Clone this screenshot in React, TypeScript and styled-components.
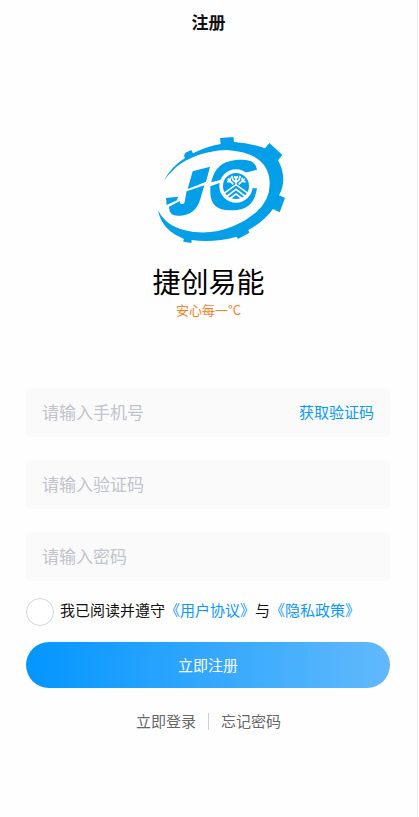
import React from "react";
import styled, { createGlobalStyle } from "styled-components";

const GlobalStyle = createGlobalStyle`
  * { box-sizing: border-box; }
  body {
    margin: 0;
    background: #fefefe;
    color: #111;
    font-family: "Noto Sans CJK SC", sans-serif;
  }
  button, input { font: inherit; }
`;

const Page = styled.div`
  display: flex;
  flex-direction: column;
  min-height: 100vh;
  margin-right: 1px;
  border-right: 1px solid #ededed;
`;

const Header = styled.header`
  display: flex;
  align-items: center;
  justify-content: center;
  height: 44px;
`;

const Title = styled.h1`
  margin: 0;
  font-size: 17px;
  line-height: 24px;
  font-weight: 700;
`;

const Brand = styled.section`
  display: flex;
  flex-direction: column;
  align-items: center;
  padding: 81px 0 68px;
`;

const Logo = styled.svg`
  display: block;
  width: 145px;
  height: 125px;
  margin-left: 28px;
`;

const BrandName = styled.h2`
  margin: 12px 0 0;
  font-size: 28px;
  line-height: 38px;
  font-weight: 400;
  color: #000;
`;

const Slogan = styled.p`
  margin: 0;
  font-size: 13px;
  line-height: 20px;
  color: #ff7f1f;
`;

const Form = styled.form`
  display: flex;
  flex-direction: column;
  padding: 0 27px 0 26px;
`;

const Field = styled.div`
  display: flex;
  align-items: center;
  height: 49px;
  margin-bottom: 23px;
  padding: 0 16px 2px;
  border-radius: 5px;
  background: #fafafa;

  &:last-of-type { margin-bottom: 17px; }
`;

const Input = styled.input`
  flex: 1;
  min-width: 0;
  padding: 0;
  border: 0;
  outline: 0;
  background: transparent;
  font-size: 17px;
  line-height: 26px;
  color: #111;

  &::placeholder { color: #c0c4cc; opacity: 1; }
`;

const CodeButton = styled.button`
  padding: 0;
  border: 0;
  background: transparent;
  font-size: 15px;
  line-height: 24px;
  color: #0b98ff;
`;

const Agreement = styled.label`
  display: flex;
  align-items: center;
  gap: 6px;
  height: 28px;
  margin-bottom: 16px;
  font-size: 15px;
  line-height: 24px;
  white-space: nowrap;
`;

const AgreementText = styled.span`
  padding-bottom: 4px;
`;

const Checkbox = styled.input`
  appearance: none;
  flex: none;
  width: 28px;
  height: 28px;
  margin: 0;
  border: 1px solid #d4d4d4;
  border-radius: 50%;
  background: #fff;

  &:checked { background: #0b98ff; border-color: #0b98ff; }
`;

const PolicyLink = styled.a`
  color: #0b98ff;
  text-decoration: none;
`;

const Submit = styled.button`
  height: 46px;
  border: 0;
  border-radius: 23px;
  background: linear-gradient(90deg, #0396ff, #62b9fb);
  font-size: 15px;
  line-height: 24px;
  color: #fff;
`;

const Footer = styled.nav`
  display: flex;
  align-items: center;
  justify-content: center;
  gap: 12px;
  padding-top: 21px;
`;

const FooterLink = styled.a`
  font-size: 15px;
  line-height: 24px;
  color: #666;
  text-decoration: none;
`;

const Divider = styled.span`
  width: 1px;
  height: 17px;
  background: #d0d0d0;
`;

function BrandLogo() {
  return (
    <Logo viewBox="0 0 435 375" role="img" aria-label="捷创易能">
      <g fill="#039fe9">
        <path d="M42 167Q60 128 105 99L102 92 106 83 124 75 129 85Q168 65 212 57L210 39 250 36 252 51Q300 54 345 70L358 54 397 90 384 106Q399 132 400 163Q399 190 387 211L405 219 389 262 369 252Q340 291 295 315L298 323 264 342 260 335Q190 354 125 345L124 354 100 350 101 341Q34 315 24 255Q46 302 105 316C190 337 270 304 320 260Q362 222 359 170Q354 83 230 75C162 77 100 103 70 135Q53 150 42 167Z" />
        <path d="M128 139 180 125 168 170Q142 181 113 192Z" />
        <path d="M110 199 163 181 151 222Q137 270 91 272Q57 276 57 245L90 228Q88 239 100 236 105 235 106 218ZM48 219 84 215 81 226 50 240Z" />
        <path d="M184 172C194 122 226 104 274 104Q317 103 321 134L258 150 208 166ZM181 184 208 174 258 190H321C312 242 286 256 240 256Q180 256 181 200Z" />
      </g>
      <circle cx="258" cy="183" r="50" fill="#fefefe" />
      <circle cx="258" cy="183" r="39" fill="#039fe9" />
      <g fill="none" stroke="#fefefe">
        <path d="M222 205 258 179 294 205M228 216 258 193 288 216M238 222 258 207 278 222" strokeWidth="5" />
        <path d="M258 176V154M252 154 258 160 264 154M250 178 233 161M231 170 240 169 241 158M266 178 284 161M276 158 277 169 287 170M245 152 249 165 258 172 267 165 271 152" strokeWidth="5" strokeLinejoin="round" />
      </g>
    </Logo>
  );
}

export default function App() {
  return (
    <>
      <GlobalStyle />
      <Page>
        <Header>
          <Title>注册</Title>
        </Header>
        <Brand>
          <BrandLogo />
          <BrandName>捷创易能</BrandName>
          <Slogan>安心每一°C</Slogan>
        </Brand>
        <Form onSubmit={(e) => e.preventDefault()}>
          <Field>
            <Input type="tel" placeholder="请输入手机号" aria-label="手机号" />
            <CodeButton type="button">获取验证码</CodeButton>
          </Field>
          <Field>
            <Input type="text" placeholder="请输入验证码" aria-label="验证码" />
          </Field>
          <Field>
            <Input type="password" placeholder="请输入密码" aria-label="密码" />
          </Field>
          <Agreement>
            <Checkbox type="checkbox" />
            <AgreementText>
              我已阅读并遵守<PolicyLink href="#terms">《用户协议》</PolicyLink>与
              <PolicyLink href="#privacy">《隐私政策》</PolicyLink>
            </AgreementText>
          </Agreement>
          <Submit type="submit">立即注册</Submit>
        </Form>
        <Footer>
          <FooterLink href="#login">立即登录</FooterLink>
          <Divider />
          <FooterLink href="#forgot">忘记密码</FooterLink>
        </Footer>
      </Page>
    </>
  );
}
